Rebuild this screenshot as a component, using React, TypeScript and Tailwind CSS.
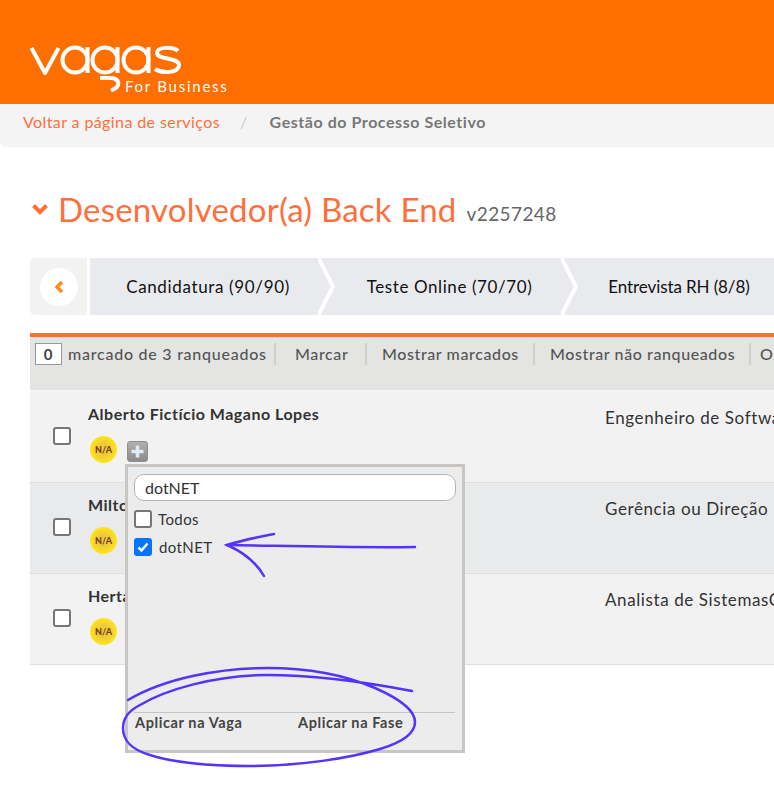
const FONT = "font-['Lato',sans-serif]";

const TOOLBAR = [
  { label: 'Marcar', style: 'w-[91px] pl-[19px]' },
  { label: 'Mostrar marcados', style: 'w-[168px] pl-[15px]' },
  { label: 'Mostrar não ranqueados', style: 'w-[216px] pl-[15px]' },
  { label: 'Ordenar', style: 'w-[100px] pl-[9px]' },
];

const ROWS = [
  { name: 'Alberto Fictício Magano Lopes', role: 'Engenheiro de Software', bg: 'bg-[#f2f2f2]' },
  { name: 'Milto', role: 'Gerência ou Direção', bg: 'bg-[#e9eaec]' },
  { name: 'Herta', role: 'Analista de SistemasC', bg: 'bg-[#f2f2f2]' },
];

function VagasLogo() {
  return (
    <svg width="152" height="50" viewBox="0 0 152 50" fill="none" stroke="white" strokeWidth="4" className="block">
      <path d="M1.500 3 L15 28 L28.500 3" strokeLinejoin="round" />
      <circle cx="45" cy="15" r="12.500" />
      <path d="M57.500 2 V28" />
      <circle cx="75" cy="15" r="12.500" />
      <path d="M87.500 2 V28" />
      <path d="M70 33 H81 C87 33 89 37 88 40 C87 43 85 44 81 45.500" />
      <circle cx="106" cy="15" r="12.500" />
      <path d="M118.500 2 V28" />
      <path d="M148 6 C143 1.500 127 1.500 127 8 C127 15 149 12 149 20 C149 28.500 132 28.500 125 24" />
    </svg>
  );
}

function Chevron() {
  return (
    <svg width="20" height="57" viewBox="0 0 20 57" fill="none" className="block shrink-0">
      <path d="M0 -1 L15 28.500 L0 58" stroke="white" strokeWidth="4" />
    </svg>
  );
}

function Step({ label, style }: { label: string; style: string }) {
  return <div className={`${style} shrink-0 text-center text-[17px] text-[#111]`}>{label}</div>;
}

function Badge() {
  return (
    <div className="flex h-[27px] w-[27px] items-center justify-center rounded-full bg-[radial-gradient(circle,#eeca3a_30%,#ffe41a_70%)] text-[9px] font-black text-[#7a3e1c]">
      N/A
    </div>
  );
}

function Row({ name, role, bg }: { name: string; role: string; bg: string }) {
  return (
    <div className={`flex h-[91px] items-start border-b border-[#dedede] ${bg}`}>
      <div className="ml-[23px] mt-[35px] h-[18px] w-[18px] shrink-0 rounded-[3px] border-2 border-[#767676] bg-white" />
      <div className="ml-[17px] w-[517px] shrink-0 pt-[11px]">
        <div className="text-[16px] font-bold leading-[22px] tracking-[0.5px] text-[#333]">{name}</div>
        <div className="ml-[2px] mt-[11px] flex items-start gap-[10px]">
          <Badge />
        </div>
      </div>
      <div className="whitespace-nowrap pt-[15px] text-[17px] leading-[22px] tracking-[0.6px] text-[#333]">{role}</div>
    </div>
  );
}

function TagPopup() {
  return (
    <div className="absolute left-[125px] top-[464px] h-[289px] w-[340px] border-[3px] border-[#c8c5c2] bg-[#ececec] px-[6px] pt-[7px]">
      <div className="h-[27px] w-[322px] rounded-[10px] border border-[#b5b5b5] bg-white pl-[10px] text-[16px] leading-[25px] text-[#333]">
        dotNET
      </div>
      <div className="mt-[7px] flex items-center gap-[6px] text-[15px] leading-[22px] tracking-[0.4px] text-[#333]">
        <div className="h-[18px] w-[18px] rounded-[3px] border-2 border-[#767676] bg-white" />
        Todos
      </div>
      <div className="mt-[6px] flex items-center gap-[7px] text-[15px] leading-[22px] tracking-[0.4px] text-[#333]">
        <div className="flex h-[18px] w-[18px] items-center justify-center rounded-[3px] bg-[#0075ff]">
          <svg width="14" height="14" viewBox="0 0 14 14" fill="none">
            <path d="M2.500 7.500 L5.500 10.500 L11.500 3.500" stroke="white" strokeWidth="2.500" />
          </svg>
        </div>
        dotNET
      </div>
      <div className="mt-[154px] flex w-[321px] border-t border-[#c4c4c4] text-[14.500px] font-bold leading-[20px] tracking-[0.6px] text-[#444]">
        <div className="ml-[1px] w-[163px]">Aplicar na Vaga</div>
        <div>Aplicar na Fase</div>
      </div>
    </div>
  );
}

export default function App() {
  return (
    <div className={`relative h-[791px] w-[774px] overflow-hidden bg-white ${FONT}`}>
      <header className="flex h-[104px] items-start bg-[#ff6e00] pl-[30px] pt-[45px]">
        <div className="relative">
          <VagasLogo />
          <span className="absolute left-[95px] top-[30px] whitespace-nowrap text-[15px] tracking-[1.750px] text-white">
            For Business
          </span>
        </div>
      </header>

      <nav className="flex h-[43px] items-start rounded-bl-[6px] bg-[#f4f4f4] pl-[23px] pt-[7px] text-[16px] leading-[22px] tracking-[0.4px]">
        <span className="text-[#ff6f3c]">Voltar a página de serviços</span>
        <span className="ml-[20px] text-[#ccc]">/</span>
        <span className="ml-[22px] font-bold tracking-[0.55px] text-[#777]">Gestão do Processo Seletivo</span>
      </nav>

      <div className="flex h-[111px] items-start pl-[31px] pt-[40px]">
        <svg width="18" height="12" viewBox="0 0 18 12" fill="none" className="mt-[16px] shrink-0">
          <path d="M2.500 2.500 L9 9 L15.500 2.500" stroke="#ff6f3c" strokeWidth="4" />
        </svg>
        <h1 className="ml-[9px] whitespace-nowrap text-[33px] leading-[44px] tracking-[0.2px] text-[#ff6f3c]">Desenvolvedor(a) Back End</h1>
        <span className="ml-[10px] mt-[13px] text-[19px] leading-[28px] tracking-[0.4px] text-[#666]">v2257248</span>
      </div>

      <div className="ml-[30px] flex h-[57px] items-center">
        <div className="flex h-[57px] w-[57px] shrink-0 items-center justify-center rounded-l-[5px] bg-[#f2f2f2]">
          <div className="flex h-[38px] w-[38px] items-center justify-center rounded-full bg-white">
            <svg width="12" height="14" viewBox="0 0 12 14" fill="none">
              <path d="M9 2 L4 7 L9 12" stroke="#ff8a1e" strokeWidth="3.500" />
            </svg>
          </div>
        </div>
        <div className="ml-[3px] flex h-[57px] flex-1 items-center overflow-hidden bg-[#e9eaee]">
          <Step label="Candidatura (90/90)" style="w-[228px] pl-[8px] tracking-[0.65px]" />
          <Chevron />
          <Step label="Teste Online (70/70)" style="w-[223px] tracking-[0.6px]" />
          <Chevron />
          <Step label="Entrevista RH (8/8)" style="w-[196px] tracking-[-0.1px]" />
        </div>
      </div>

      <div className="ml-[30px] mt-[18px] h-[57px] border-t-4 border-[#ff6f3c] bg-[#e4e5e3] pl-[5px] pt-[6px] text-[16px] font-medium leading-[22px] tracking-[0.6px] text-[#555]">
        <div className="flex items-center whitespace-nowrap">
          <div className="h-[22px] w-[27px] shrink-0 border border-[#999] bg-white text-center text-[15px] font-bold leading-[20px] text-[#444]">
            0
          </div>
          <div className="ml-[6px] w-[208px] shrink-0 border-r-2 border-[#cfcfcf] tracking-[0.75px]">marcado de 3 ranqueados</div>
          {TOOLBAR.map((item) => (
            <div key={item.label} className={`${item.style} shrink-0 border-r-2 border-[#cfcfcf]`}>
              {item.label}
            </div>
          ))}
        </div>
      </div>

      <div className="ml-[30px] border-t-2 border-[#f5f5f5]">
        {ROWS.map((row) => (
          <Row key={row.name} {...row} />
        ))}
      </div>

      <div className="absolute left-[127px] top-[441px] flex h-[21px] w-[21px] items-center justify-center rounded-[3px] border border-[#8e8e8e] bg-gradient-to-b from-[#b0b0b0] to-[#8c8c8c]">
        <svg width="15" height="15" viewBox="0 0 15 15" fill="none">
          <path d="M7.500 1.500 V13.500 M1.500 7.500 H13.500" stroke="#e0ebf6" strokeWidth="3.500" />
        </svg>
      </div>

      <TagPopup />

      {/* hand drawn annotations on top of the screenshot */}
      <svg width="774" height="791" viewBox="0 0 774 791" fill="none" className="pointer-events-none absolute left-0 top-0">
        <g stroke="#5533ff" strokeWidth="2.500" strokeLinecap="round">
          <path d="M415 547 C360 548 290 546 227 545" />
          <path d="M274 534 C258 537 240 541 227 545 C243 552 256 562 264 576" />
          <path d="M128 700 C165 678 220 668 267 668 C310 668 345 675 375 688 C400 699 415 710 415 722 C415 735 400 743 380 749 C350 758 300 766 250 766 C210 766 175 763 150 755 C130 749 123 740 123 728 C123 717 130 710 140 705 C165 690 215 675 267 675 C315 675 365 682 412 691" />
        </g>
      </svg>
    </div>
  );
}
